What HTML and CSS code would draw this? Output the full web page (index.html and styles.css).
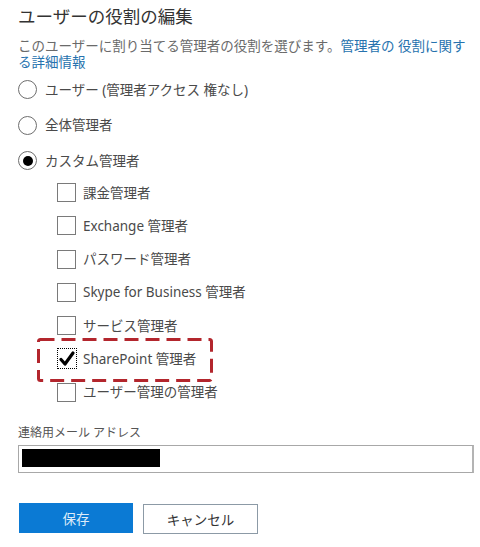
FILE: index.html
```html
<!DOCTYPE html>
<html lang="ja">
<head>
<meta charset="utf-8">
<link rel="stylesheet" href="styles.css">
</head>
<body>
<div class="panel">
  <h1 class="title">ユーザーの役割の編集</h1>
  <p class="desc">このユーザーに割り当てる管理者の役割を選びます。<a class="link" href="#">管理者の 役割に関する詳細情報</a></p>

  <div class="options">
    <div class="radio-row"><span class="radio"></span><span class="label">ユーザー (管理者アクセス 権なし)</span></div>
    <div class="radio-row"><span class="radio"></span><span class="label">全体管理者</span></div>
    <div class="radio-row"><span class="radio checked"></span><span class="label">カスタム管理者</span></div>
  </div>

  <div class="checks">
    <div class="check-row"><span class="box"></span><span class="label">課金管理者</span></div>
    <div class="check-row"><span class="box"></span><span class="label">Exchange 管理者</span></div>
    <div class="check-row"><span class="box"></span><span class="label">パスワード管理者</span></div>
    <div class="check-row"><span class="box"></span><span class="label">Skype for Business 管理者</span></div>
    <div class="check-row"><span class="box"></span><span class="label">サービス管理者</span></div>
    <div class="check-row highlight">
      <span class="box checked"><svg width="18" height="19" viewBox="0 0 18 19"><path d="M3 10.5 L7 15 L15 4" fill="none" stroke="#000" stroke-width="3.2" stroke-linecap="round" stroke-linejoin="round"/></svg></span>
      <span class="label">SharePoint 管理者</span>
      <svg class="annot" width="176" height="44" viewBox="0 0 176 44"><rect x="1.5" y="1.5" width="173" height="41" rx="2" fill="none" stroke="#b3262d" stroke-width="3" stroke-dasharray="14 7"/></svg>
    </div>
    <div class="check-row"><span class="box"></span><span class="label">ユーザー管理の管理者</span></div>
  </div>

  <div class="field">
    <div class="field-label">連絡用メール アドレス</div>
    <div class="input"><span class="redact"></span></div>
  </div>

  <div class="actions">
    <button class="btn primary">保存</button>
    <button class="btn secondary">キャンセル</button>
  </div>
</div>
</body>
</html>
```

FILE: styles.css
```css
* { box-sizing: border-box; }
html, body {
  margin: 0;
  padding: 0;
  background: #fff;
}
body {
  font-family: "Noto Sans", "Noto Sans CJK JP", sans-serif;
  color: #444;
}
.panel {
  padding: 5px 6px 0 18px;
  width: 480px;
}
.title {
  margin: 0;
  font-size: 17.5px;
  line-height: 22px;
  font-weight: 400;
  color: #333;
}
.desc {
  margin: 10.5px 0 0;
  font-size: 13.5px;
  line-height: 16px;
  color: #6a6a6a;
  width: 456px;
}
.link {
  color: #2672ae;
  text-decoration: none;
}
.options {
  margin-top: 10px;
  display: flex;
  flex-direction: column;
  gap: 15.5px;
}
.radio-row, .check-row {
  display: flex;
  align-items: center;
  height: 20px;
}
.label {
  font-size: 13.5px;
  line-height: 20px;
  color: #4a4a4a;
  white-space: nowrap;
}
.radio {
  width: 19px;
  height: 19px;
  border: 1.2px solid #6e6e6e;
  border-radius: 50%;
  margin-right: 8px;
  display: flex;
  align-items: center;
  justify-content: center;
  flex: none;
}
.radio.checked::after {
  content: "";
  width: 10px;
  height: 10px;
  border-radius: 50%;
  background: #000;
}
.checks {
  margin-top: 12px;
  padding-left: 39px;
  display: flex;
  flex-direction: column;
  gap: 13.3px;
}
.box {
  width: 19px;
  height: 19px;
  border: 1px solid #7a7a7a;
  margin-right: 7px;
  flex: none;
  display: flex;
  align-items: center;
  justify-content: center;
}
.box.checked {
  width: 20px;
  height: 21px;
  border: 1px dotted #000;
  margin-right: 6px;
}
.highlight {
  position: relative;
}
.annot {
  position: absolute;
  left: -20px;
  top: -11px;
  pointer-events: none;
}
.field {
  margin-top: 23px;
}
.field-label {
  font-size: 12px;
  line-height: 16px;
  color: #555;
}
.input {
  margin-top: 4px;
  width: 456px;
  height: 28px;
  border: 1px solid #a8a8a8;
  border-right: 2px solid #b4b4b4;
  padding: 3px;
}
.redact {
  display: block;
  width: 138px;
  height: 18px;
  background: #000;
}
.actions {
  margin-top: 30px;
  display: flex;
  gap: 10px;
  padding-left: 1px;
  align-items: flex-start;
}
.btn {
  font-family: "Noto Sans", "Noto Sans CJK JP", sans-serif;
  font-size: 13.5px;
  height: 30px;
  padding: 0;
  cursor: pointer;
}
.primary {
  width: 114px;
  background: #0b7ad4;
  border: none;
  color: #dcebf8;
}
.secondary {
  width: 115px;
  margin-top: 1px;
  background: #fff;
  border: 1px solid #8c9aa6;
  color: #333;
}
```
